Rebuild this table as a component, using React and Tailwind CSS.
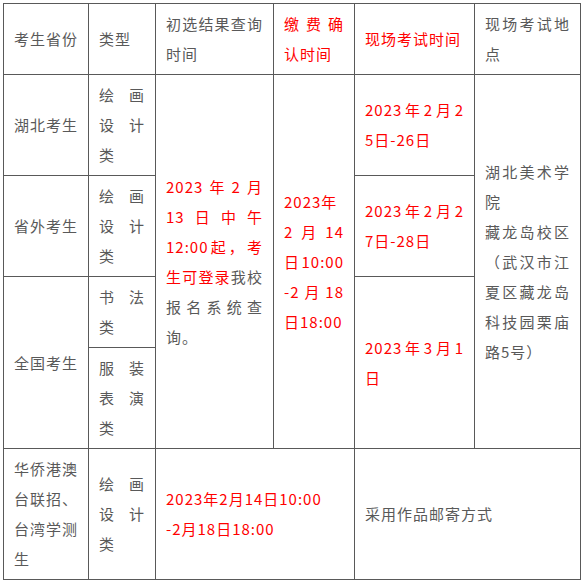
import React from "react";

const R = "text-[#ff0000]";

function Line({ j, children }) {
  return (
    <span className={j ? "block text-justify [text-align-last:justify]" : "block"}>
      {children}
    </span>
  );
}

function Cell({ className = "", children }) {
  return (
    <div className={"bg-white flex flex-col justify-center px-[10px] " + className}>
      {children}
    </div>
  );
}

export default function App() {
  return (
    <div className="bg-white min-h-screen pt-[3px] pl-[3px] font-['Noto_Sans_CJK_SC','Microsoft_YaHei',sans-serif] text-[15px] leading-[30px] tracking-[1px] text-[#595959]">
      <div className="grid w-max grid-cols-[84px_66px_117px_80px_119px_105px] grid-rows-[70px_100px_100px_70px_100px_130px] gap-px bg-[#595959] p-px">
        {/* header */}
        <Cell className="col-start-1 row-start-1">
          <Line>考生省份</Line>
        </Cell>
        <Cell className="col-start-2 row-start-1">
          <Line>类型</Line>
        </Cell>
        <Cell className="col-start-3 row-start-1">
          <Line j>初选结果查询</Line>
          <Line>时间</Line>
        </Cell>
        <Cell className={"col-start-4 row-start-1 " + R}>
          <Line j>缴费确</Line>
          <Line>认时间</Line>
        </Cell>
        <Cell className={"col-start-5 row-start-1 " + R}>
          <Line>现场考试时间</Line>
        </Cell>
        <Cell className="col-start-6 row-start-1">
          <Line j>现场考试地</Line>
          <Line>点</Line>
        </Cell>

        {/* col 1 */}
        <Cell className="col-start-1 row-start-2">
          <Line>湖北考生</Line>
        </Cell>
        <Cell className="col-start-1 row-start-3">
          <Line>省外考生</Line>
        </Cell>
        <Cell className="col-start-1 row-start-4 row-span-2">
          <Line>全国考生</Line>
        </Cell>
        <Cell className="col-start-1 row-start-6">
          <Line j>华侨港澳</Line>
          <Line j>台联招、</Line>
          <Line j>台湾学测</Line>
          <Line>生</Line>
        </Cell>

        {/* col 2 */}
        <Cell className="col-start-2 row-start-2">
          <Line j>绘画</Line>
          <Line j>设计</Line>
          <Line>类</Line>
        </Cell>
        <Cell className="col-start-2 row-start-3">
          <Line j>绘画</Line>
          <Line j>设计</Line>
          <Line>类</Line>
        </Cell>
        <Cell className="col-start-2 row-start-4">
          <Line j>书法</Line>
          <Line>类</Line>
        </Cell>
        <Cell className="col-start-2 row-start-5">
          <Line j>服装</Line>
          <Line j>表演</Line>
          <Line>类</Line>
        </Cell>
        <Cell className="col-start-2 row-start-6">
          <Line j>绘画</Line>
          <Line j>设计</Line>
          <Line>类</Line>
        </Cell>

        {/* col 3 */}
        <Cell className="col-start-3 row-start-2 row-span-4">
          <Line j>
            <span className={R}>2023年2月</span>
          </Line>
          <Line j>
            <span className={R}>13日中午</span>
          </Line>
          <Line j>
            <span className={R}>12:00起，考</span>
          </Line>
          <Line j>
            <span className={R}>生可登录</span>我校
          </Line>
          <Line j>报名系统查</Line>
          <Line>询。</Line>
        </Cell>

        {/* col 4 */}
        <Cell className={"col-start-4 row-start-2 row-span-4 " + R}>
          <Line>2023年</Line>
          <Line j>2月14</Line>
          <Line j>日10:00</Line>
          <Line j>-2月18</Line>
          <Line>日18:00</Line>
        </Cell>

        {/* col 5 */}
        <Cell className={"col-start-5 row-start-2 " + R}>
          <Line j>2023年2月2</Line>
          <Line>5日-26日</Line>
        </Cell>
        <Cell className={"col-start-5 row-start-3 " + R}>
          <Line j>2023年2月2</Line>
          <Line>7日-28日</Line>
        </Cell>
        <Cell className={"col-start-5 row-start-4 row-span-2 " + R}>
          <Line j>2023年3月1</Line>
          <Line>日</Line>
        </Cell>

        {/* col 6 */}
        <Cell className="col-start-6 row-start-2 row-span-4">
          <Line j>湖北美术学</Line>
          <Line>院</Line>
          <Line j>藏龙岛校区</Line>
          <Line j>（武汉市江</Line>
          <Line j>夏区藏龙岛</Line>
          <Line j>科技园栗庙</Line>
          <Line>路5号）</Line>
        </Cell>

        {/* bottom row merged */}
        <Cell className={"col-start-3 col-span-2 row-start-6 " + R}>
          <Line>2023年2月14日10:00</Line>
          <Line>-2月18日18:00</Line>
        </Cell>
        <Cell className="col-start-5 col-span-2 row-start-6">
          <Line>采用作品邮寄方式</Line>
        </Cell>
      </div>
    </div>
  );
}
